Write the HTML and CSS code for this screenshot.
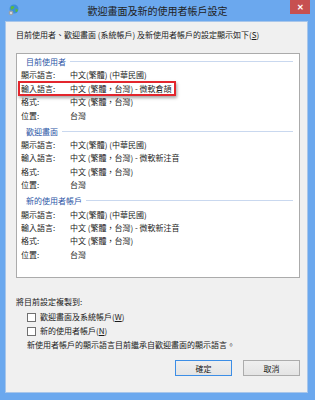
FILE: index.html
```html
<!DOCTYPE html>
<html lang="zh-Hant">
<head>
  <meta charset="UTF-8" />
  <title>歡迎畫面及新的使用者帳戶設定</title>
  <link rel="stylesheet" href="styles.css">
</head>
<body>

<div class="window">
  <div class="titlebar">
    <svg class="app-icon" width="11" height="12" viewBox="0 0 11 12">
      <circle cx="6" cy="5" r="4.5" fill="#3d8fd9"/>
      <path d="M3 2.5 C4.5 1.5 6 2 6.5 3.5 C6 4.5 4.5 4.5 4 6 C3 5.5 2 4 3 2.5Z" fill="#5cbb3c"/>
      <path d="M7.5 5 C9 4.5 10 5.5 9.8 7 C9 8 8 8.5 7.5 7.5Z" fill="#5cbb3c"/>
      <circle cx="3" cy="9" r="2.4" fill="#9aa3ad"/>
      <circle cx="3" cy="9" r="0.9" fill="#e8eef4"/>
    </svg>
    <div class="title">歡迎畫面及新的使用者帳戶設定</div>
    <div class="close">&#x2715;</div>
  </div>

  <div class="content">
    <p class="intro">目前使用者、歡迎畫面 (系統帳戶) 及新使用者帳戶的設定顯示如下(<u>S</u>)</p>

    <div class="panel">
      <div class="group">
        <div class="group-head"><span>目前使用者</span></div>
        <div class="row"><span class="label">顯示語言:</span><span>中文(繁體) (中華民國)</span></div>
        <div class="row mark"><span class="label">輸入語言:</span><span>中文 (繁體，台灣) - 微軟倉頡</span></div>
        <div class="row"><span class="label">格式:</span><span>中文 (繁體，台灣)</span></div>
        <div class="row"><span class="label">位置:</span><span>台灣</span></div>
      </div>
      <div class="group">
        <div class="group-head"><span>歡迎畫面</span></div>
        <div class="row"><span class="label">顯示語言:</span><span>中文(繁體) (中華民國)</span></div>
        <div class="row"><span class="label">輸入語言:</span><span>中文 (繁體，台灣) - 微軟新注音</span></div>
        <div class="row"><span class="label">格式:</span><span>中文 (繁體，台灣)</span></div>
        <div class="row"><span class="label">位置:</span><span>台灣</span></div>
      </div>
      <div class="group">
        <div class="group-head"><span>新的使用者帳戶</span></div>
        <div class="row"><span class="label">顯示語言:</span><span>中文(繁體) (中華民國)</span></div>
        <div class="row"><span class="label">輸入語言:</span><span>中文 (繁體，台灣) - 微軟新注音</span></div>
        <div class="row"><span class="label">格式:</span><span>中文 (繁體，台灣)</span></div>
        <div class="row"><span class="label">位置:</span><span>台灣</span></div>
      </div>
    </div>

    <p class="copy-to">將目前設定複製到:</p>
    <label class="check"><span class="box"></span><span>歡迎畫面及系統帳戶(<u>W</u>)</span></label>
    <label class="check"><span class="box"></span><span>新的使用者帳戶(<u>N</u>)</span></label>
    <p class="note">新使用者帳戶的顯示語言目前繼承自歡迎畫面的顯示語言。</p>

    <div class="buttons">
      <button class="btn btn-default">確定</button>
      <button class="btn">取消</button>
    </div>
  </div>
</div>

</body>
</html>
```

FILE: styles.css
```css
body {
  margin: 0;
  font-family: "Noto Sans CJK TC", "Noto Sans", sans-serif;
  font-size: 8px;
  color: #1a1a1a;
  background: #6ba8ee;
}

.window {
  width: 315px;
  height: 400px;
  box-sizing: border-box;
  padding: 0 7px 7px 5px;
  background: #6ba8ee;
  display: flex;
  flex-direction: column;
}

.titlebar {
  position: relative;
  height: 21px;
  flex-shrink: 0;
}

.app-icon {
  position: absolute;
  left: 3px;
  top: 4px;
}

.title {
  text-align: center;
  font-size: 10px;
  line-height: 22px;
  color: #222;
  margin-left: -5px;
  margin-right: -7px;
}

.close {
  position: absolute;
  right: -2px;
  top: 0;
  width: 20px;
  height: 14px;
  background: #c75050;
  color: #fff;
  font-size: 8px;
  font-weight: bold;
  line-height: 14px;
  text-align: center;
}

.content {
  flex: 1;
  background: #f0f0f0;
  border: 1px solid #a8c6ea;
  padding: 6px 7px 0 10px;
  display: flex;
  flex-direction: column;
}

p {
  margin: 0;
}

u {
  text-decoration: underline;
}

.intro {
  line-height: 13px;
}

.panel {
  margin-top: 12px;
  background: #fff;
  border: 1px solid #ababab;
  padding: 1px 6px 16px 0;
}

.group + .group {
  margin-top: 2.6px;
}

.group-head {
  display: flex;
  align-items: center;
  gap: 4px;
  padding-left: 9px;
  line-height: 13.4px;
  color: #2c55a6;
}

.group-head::after {
  content: "";
  flex: 1;
  height: 1px;
  background: #c9d8ef;
}

.row {
  display: flex;
  padding-left: 4px;
  line-height: 13.4px;
}

.label {
  width: 49px;
  flex-shrink: 0;
}

.row.mark {
  position: relative;
  width: fit-content;
}

.row.mark::after {
  content: "";
  position: absolute;
  top: -1px;
  bottom: -1px;
  left: 1px;
  right: -4px;
  border: 2px solid #e3262d;
  box-shadow: 1px 2px 3px rgba(0,0,0,0.35);
}

.copy-to {
  margin-top: 17px;
  line-height: 13px;
}

.check {
  display: flex;
  align-items: center;
  gap: 4px;
  margin-left: 11px;
  line-height: 14px;
  margin-top: 2px;
}

.check + .check {
  margin-top: 0;
}

.box {
  width: 7px;
  height: 7px;
  background: #fff;
  border: 1px solid #707070;
}

.note {
  margin-left: 11px;
  line-height: 14px;
}

.buttons {
  margin-top: 8px;
  display: flex;
  justify-content: flex-end;
  gap: 11px;
}

.btn {
  width: 57px;
  height: 16px;
  padding: 0;
  font-family: inherit;
  font-size: 8px;
  color: #1a1a1a;
  background: linear-gradient(#efefef, #e4e4e4);
  border: 1px solid #acacac;
}

.btn-default {
  border-color: #3c8ee6;
}
```
